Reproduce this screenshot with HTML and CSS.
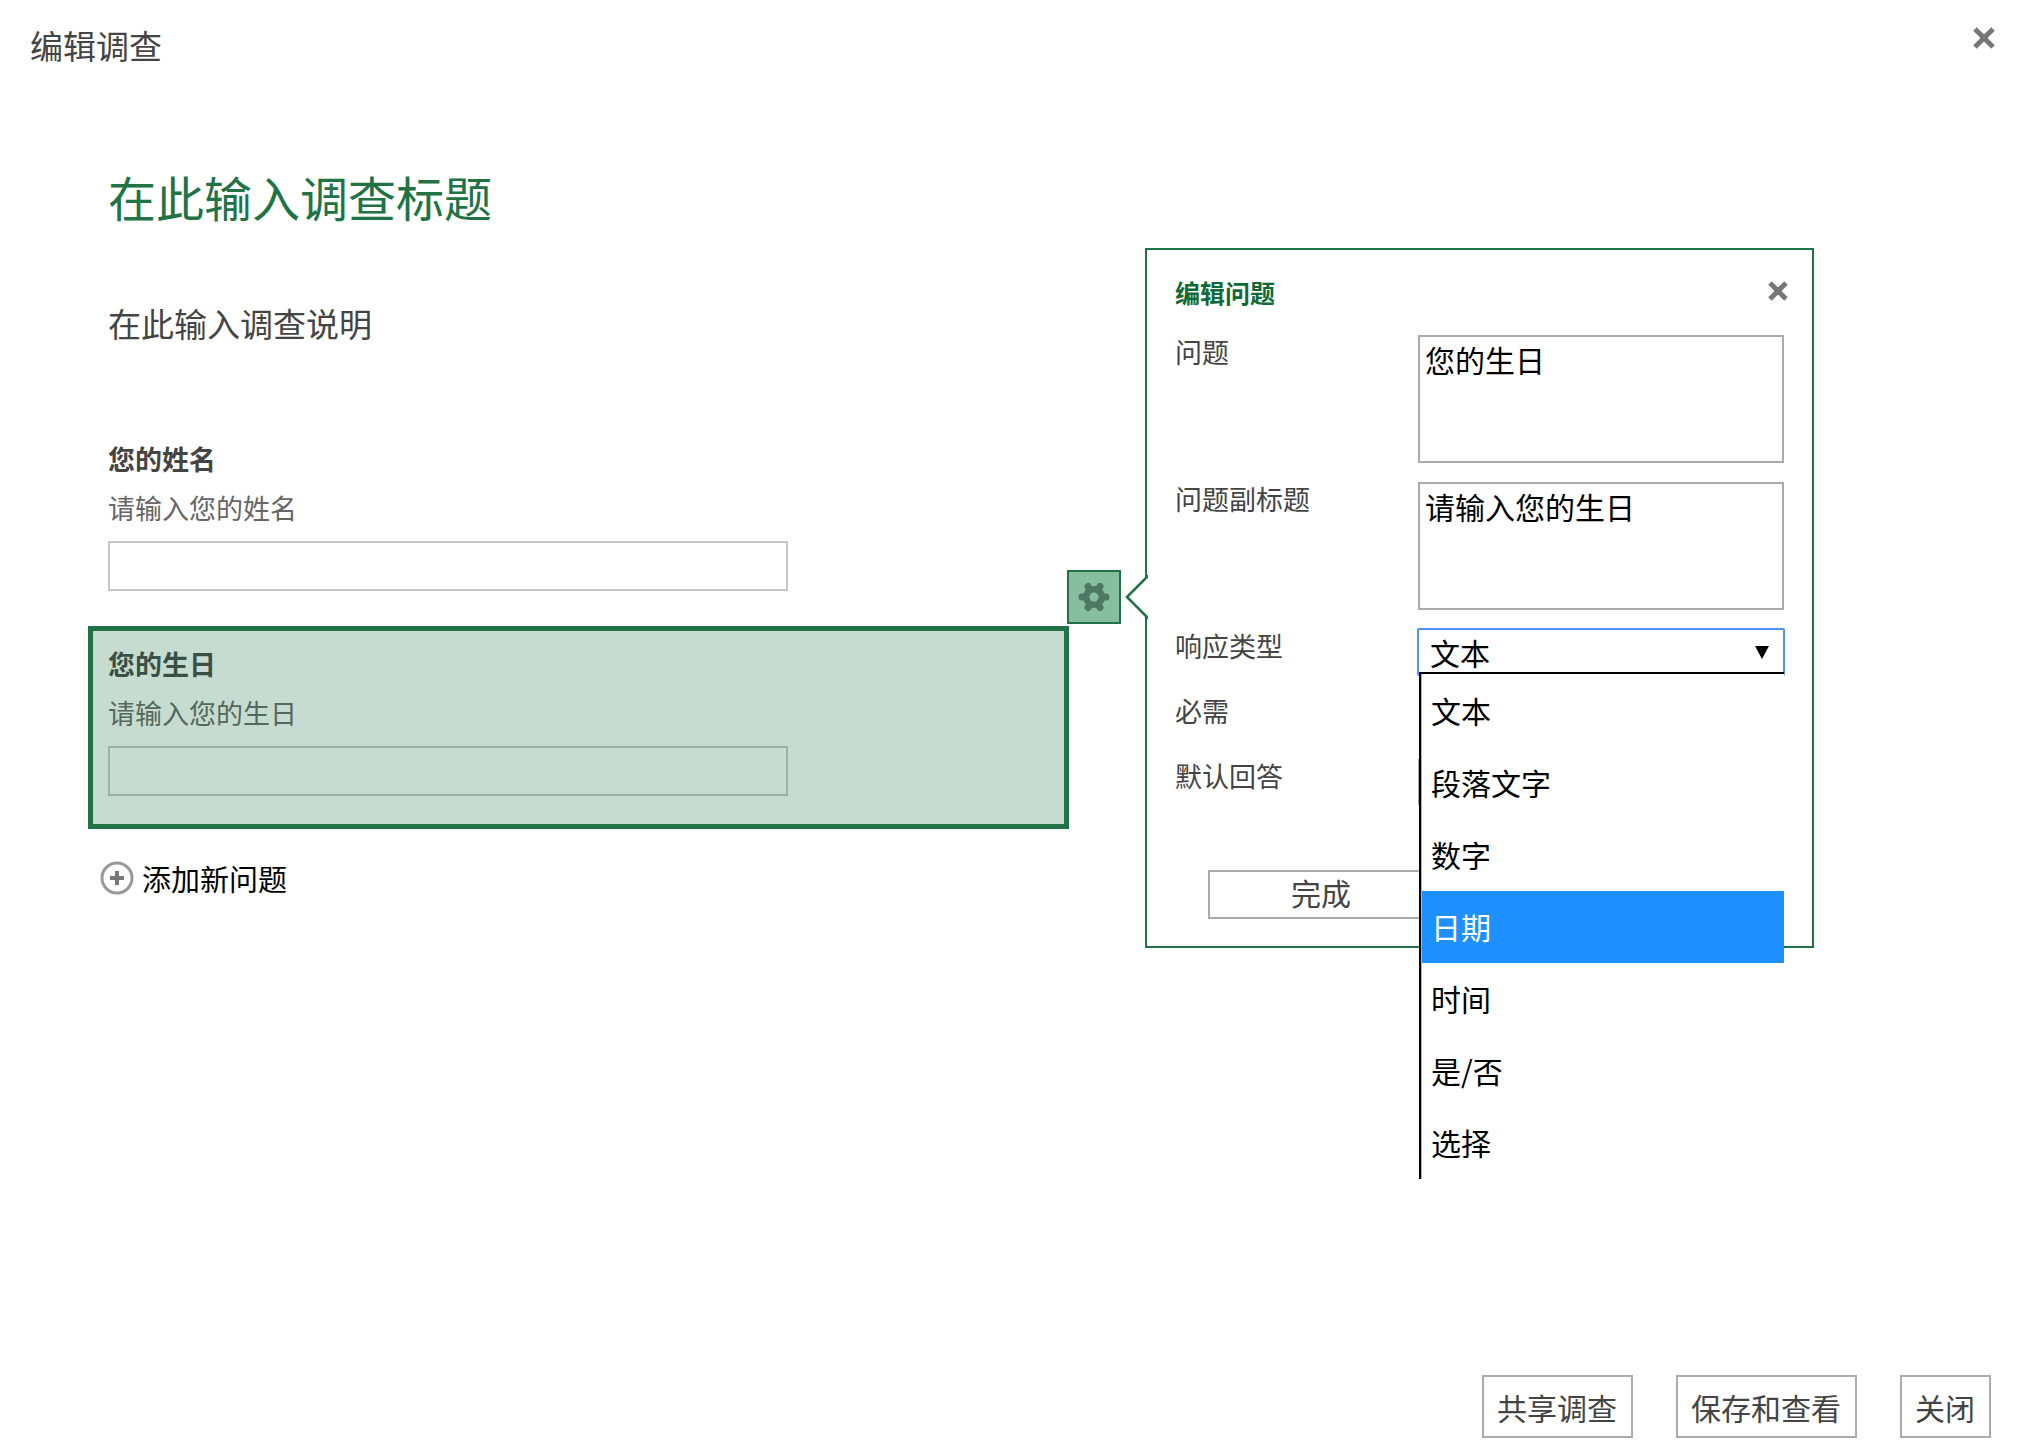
FILE: index.html
```html
<!DOCTYPE html>
<html lang="zh-CN">
<head>
<meta charset="utf-8">
<title>编辑调查</title>
<link rel="stylesheet" href="styles.css">
</head>
<body>
<div class="dialog">
  <header class="dialog-header">
    <h2 class="dialog-title">编辑调查</h2>
    <button class="icon-button" type="button" aria-label="关闭">
      <svg width="24" height="24" viewBox="0 0 24 24"><path d="M3 3L21 21M21 3L3 21" stroke="#777" stroke-width="5"/><rect x="8" y="8" width="8" height="8" fill="#777"/></svg>
    </button>
  </header>

  <main class="workspace">
    <section class="survey">
      <h1 class="survey-title">在此输入调查标题</h1>
      <p class="survey-description">在此输入调查说明</p>

      <div class="question">
        <label class="question-label" for="name">您的姓名</label>
        <p class="question-hint">请输入您的姓名</p>
        <input class="question-input" id="name" type="text">
      </div>

      <div class="question question-selected">
        <label class="question-label" for="birthday">您的生日</label>
        <p class="question-hint">请输入您的生日</p>
        <input class="question-input" id="birthday" type="text">
        <button class="gear-button" type="button" aria-label="编辑问题">
          <svg width="32" height="32" viewBox="-16 -16 32 32">
            <g stroke="#4f7864" stroke-width="7" stroke-linecap="round">
              <path d="M-12 0H12M-6 -10.5L6 10.5M6 -10.5L-6 10.5"/>
            </g>
            <circle r="11" fill="#4f7864"/>
            <circle r="4.5" fill="#86bf9f"/>
          </svg>
        </button>
      </div>

      <button class="add-question" type="button">
        <svg width="34" height="34" viewBox="0 0 34 34"><circle cx="17" cy="17" r="15" fill="none" stroke="#999" stroke-width="3"/><path d="M17 10V24M10 17H24" stroke="#777" stroke-width="4"/></svg>
        <span>添加新问题</span>
      </button>
    </section>

    <form class="panel">
      <svg class="panel-arrow" width="23" height="44" viewBox="0 0 23 44"><path d="M23 1L2 22L23 43Z" fill="#fff"/><path d="M22 0V2L2 22L22 42V44" fill="none" stroke="#217346" stroke-width="2.6"/></svg>
      <div class="panel-header">
        <h3 class="panel-title">编辑问题</h3>
        <button class="icon-button" type="button" aria-label="关闭">
          <svg width="20" height="20" viewBox="0 0 20 20"><path d="M2 2L18 18M18 2L2 18" stroke="#777" stroke-width="5"/><rect x="6" y="6" width="8" height="8" fill="#777"/></svg>
        </button>
      </div>
      <div class="fields">
        <label class="field-label" for="q-text">问题</label>
        <textarea class="field-area" id="q-text">您的生日</textarea>

        <label class="field-label" for="q-sub">问题副标题</label>
        <textarea class="field-area" id="q-sub">请输入您的生日</textarea>

        <label class="field-label" for="q-type">响应类型</label>
        <div class="type-picker">
          <select class="type-select" id="q-type"><option>文本</option></select>
          <svg class="type-caret" width="14" height="14" viewBox="0 0 14 14"><path d="M0 0H14L7 13Z"/></svg>
          <ul class="type-list" role="listbox" aria-label="响应类型">
            <li role="option">文本</li>
            <li role="option">段落文字</li>
            <li role="option">数字</li>
            <li role="option" class="active" aria-selected="true">日期</li>
            <li role="option">时间</li>
            <li role="option">是/否</li>
            <li role="option">选择</li>
          </ul>
        </div>

        <label class="field-label" for="q-required">必需</label>
        <div class="check-cell"><input id="q-required" type="checkbox"></div>

        <label class="field-label" for="q-default">默认回答</label>
        <input class="field-line" id="q-default" type="text">
      </div>
      <div class="panel-actions">
        <button class="done-button" type="button">完成</button>
      </div>
    </form>
  </main>

  <footer class="dialog-footer">
    <button class="footer-button" type="button">共享调查</button>
    <button class="footer-button" type="button">保存和查看</button>
    <button class="footer-button" type="button">关闭</button>
  </footer>
</div>
</body>
</html>
```
FILE: styles.css
```css
* {
  box-sizing: border-box;
}

body,
h1,
h2,
h3,
p,
ul {
  margin: 0;
  padding: 0;
}

body,
button,
input,
select,
textarea {
  font-family: "Noto Sans CJK SC", sans-serif;
}

body {
  background: #fff;
  color: #444;
}

button {
  background: none;
  border: 0;
  padding: 0;
  color: #444;
}

svg {
  display: block;
}

.dialog {
  display: flex;
  flex-direction: column;
  min-height: 100vh;
}

.dialog-header {
  display: flex;
  justify-content: space-between;
  align-items: flex-start;
  padding: 20px 25px 24px 30px;
}

.dialog-title {
  font-size: 33px;
  line-height: 50px;
  font-weight: 400;
}

.dialog-header .icon-button {
  margin-top: 6px;
}

/* Survey canvas and question editor */
.workspace {
  flex: 1;
  display: grid;
  grid-template-columns: minmax(0, 981fr) minmax(0, 669fr);
  column-gap: 76px;
  align-items: start;
  padding: 0 207px 0 88px;
}

.survey {
  padding-top: 70px;
}

.survey-title {
  padding-left: 20px;
  font-size: 48px;
  line-height: 64px;
  font-weight: 400;
  color: #217346;
}

.survey-description {
  margin: 73px 0 76px;
  padding-left: 20px;
  font-size: 33px;
  line-height: 44px;
}

.question {
  position: relative;
  border: 5px solid transparent;
  padding: 15px 15px 28px;
}

.question + .question {
  margin-top: 2px;
}

.question-label {
  display: block;
  font-size: 27px;
  line-height: 36px;
  font-weight: 700;
}

.question-hint {
  margin: 13px 0 15px;
  font-size: 27px;
  line-height: 36px;
  color: #666;
}

.question-input {
  display: block;
  width: 680px;
  max-width: 100%;
  height: 50px;
  border: 2px solid #c6c6c6;
  padding: 0 8px;
  font-size: 27px;
}

.question-selected {
  border-color: #217346;
}

.question-selected::after {
  content: "";
  position: absolute;
  inset: 0;
  background: rgba(33, 115, 70, 0.25);
}

.gear-button {
  position: absolute;
  top: -61px;
  right: -57px;
  display: grid;
  place-items: center;
  width: 54px;
  height: 54px;
  border: 2px solid #217346;
  background: #86bf9f;
}

.add-question {
  display: flex;
  align-items: center;
  gap: 8px;
  margin: 29px 0 0 12px;
  font-size: 29px;
  line-height: 40px;
  color: #000;
}

.panel {
  position: relative;
  margin-top: 154px;
  border: 2px solid #217346;
  padding: 24px 28px 27px;
}

.panel-arrow {
  position: absolute;
  top: 325px;
  left: -22px;
}

.panel-header {
  display: flex;
  justify-content: space-between;
  align-items: flex-start;
  margin-bottom: 25px;
}

.panel-title {
  font-size: 25px;
  line-height: 36px;
  font-weight: 700;
  color: #0e6b37;
}

.panel-header .icon-button {
  margin: 7px -4px 0 0;
}

.fields {
  display: grid;
  grid-template-columns: 243px minmax(0, 1fr);
  row-gap: 19px;
}

.field-label {
  font-size: 27px;
  line-height: 34px;
}

.field-area {
  display: block;
  width: 100%;
  height: 128px;
  resize: none;
  border: 2px solid #ababab;
  padding: 2px 5px;
  font-size: 30px;
  line-height: 40px;
  color: #000;
}

.field-line {
  width: 100%;
  height: 46px;
  border: 2px solid #ababab;
  font-size: 30px;
}

.type-picker {
  position: relative;
  height: 46px;
}

.type-select {
  appearance: none;
  display: block;
  width: 100%;
  height: 46px;
  border: 1px solid #ababab;
  border-radius: 1px;
  outline: 2px solid #4f90fe;
  outline-offset: -1px;
  padding: 0 11px 2px;
  background: #fff;
  font-size: 30px;
  color: #000;
}

.type-caret {
  position: absolute;
  top: 17px;
  right: 15px;
}

.type-list {
  position: absolute;
  z-index: 1;
  top: 43px;
  left: 1px;
  right: 0;
  list-style: none;
  border: solid #000;
  border-width: 2px 0 0 2px;
  padding: 1px 0 0 1px;
  background: #fff;
  box-shadow: inset 1px 0 #8fb4ee;
}

.type-list li {
  height: 72px;
  padding-left: 9px;
  font-size: 30px;
  line-height: 70px;
  color: #000;
}

.type-list .active {
  background: #1e90ff;
  color: #fff;
}

.check-cell {
  height: 46px;
}

.panel-actions {
  margin-top: 65px;
  padding-left: 33px;
}

.done-button {
  display: block;
  width: 226px;
  height: 49px;
  border: 2px solid #ababab;
  padding-bottom: 5px;
  font-size: 30px;
  line-height: 40px;
}

.dialog-footer {
  display: flex;
  justify-content: flex-end;
  gap: 43px;
  padding: 0 30px 16px;
}

.footer-button {
  height: 63px;
  border: 2px solid #ababab;
  padding: 0 14px 0 13px;
  font-size: 30px;
  line-height: 56px;
}
```
